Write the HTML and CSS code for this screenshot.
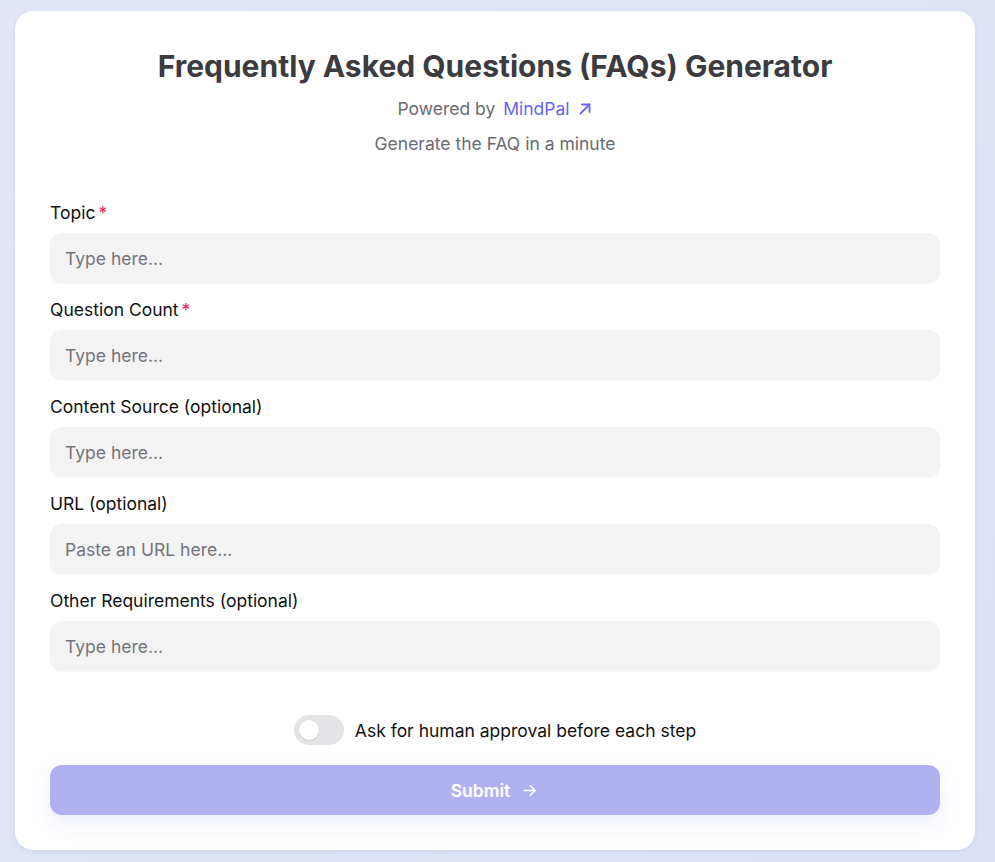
FILE: index.html
```html
<!DOCTYPE html>
<html>
<head>
<meta charset="UTF-8">
<title>FAQs Generator</title>
<link rel="stylesheet" href="styles.css">
</head>
<body>
  <div class="card">
    <div class="head">
      <h1>Frequently Asked Questions (FAQs) Generator</h1>
      <p class="powered">Powered by <a href="#">MindPal
        <svg width="16" height="16" viewBox="0 0 16 16" fill="none" stroke="currentColor" stroke-width="1.8" stroke-linecap="round" stroke-linejoin="round"><path d="M3.5 12.5L12.5 3.5"/><path d="M5 3.5h7.5V11"/></svg></a></p>
      <p class="sub">Generate the FAQ in a minute</p>
    </div>

    <form class="fields">
      <div class="field">
        <label>Topic<span class="req">*</span></label>
        <input type="text" placeholder="Type here...">
      </div>
      <div class="field">
        <label>Question Count<span class="req">*</span></label>
        <input type="text" placeholder="Type here...">
      </div>
      <div class="field">
        <label>Content Source (optional)</label>
        <input type="text" placeholder="Type here...">
      </div>
      <div class="field">
        <label>URL (optional)</label>
        <input type="text" placeholder="Paste an URL here...">
      </div>
      <div class="field">
        <label>Other Requirements (optional)</label>
        <input type="text" placeholder="Type here...">
      </div>
    </form>

    <div class="approval">
      <span class="toggle"><span class="knob"></span></span>
      <span>Ask for human approval before each step</span>
    </div>

    <button class="submit">Submit
      <svg width="19" height="19" viewBox="0 0 24 24" fill="none" stroke="currentColor" stroke-width="2" stroke-linecap="round" stroke-linejoin="round"><path d="M5 12h14"/><path d="M13 6l6 6-6 6"/></svg>
    </button>
  </div>
</body>
</html>
```

FILE: styles.css
```css
* {
  box-sizing: border-box;
}
body {
  margin: 0;
  padding: 11px 20px 11px 15px;
  font-family: Inter, "Noto Sans", sans-serif;
  background: linear-gradient(135deg, #e2e6f8 0%, #dde1f5 100%);
  min-height: 862px;
}
.card {
  width: 960px;
  background: #fff;
  border-radius: 18px;
  padding: 37px 35px 35px;
  box-shadow: 0 1px 4px rgba(90, 100, 160, 0.15);
}
.head {
  text-align: center;
}
.head h1 {
  margin: 0;
  font-size: 30px;
  line-height: 36px;
  font-weight: 700;
  color: #3b3b40;
}
.powered {
  margin: 13px 0 0;
  font-size: 17.5px;
  line-height: 24px;
  color: #6b6b72;
}
.powered a {
  color: #6366f1;
  text-decoration: none;
  margin-left: 3px;
}
.powered svg {
  vertical-align: -2px;
  margin-left: 2px;
}
.sub {
  margin: 11px 0 0;
  font-size: 17.5px;
  line-height: 24px;
  color: #6b6b72;
}
.fields {
  margin-top: 45px;
  display: flex;
  flex-direction: column;
  gap: 15px;
}
.field {
  display: flex;
  flex-direction: column;
  gap: 8px;
}
.field label {
  font-size: 17.5px;
  line-height: 24px;
  color: #111;
}
.req {
  color: #f0245a;
  margin-left: 3px;
}
.field input {
  height: 50px;
  border: none;
  border-radius: 12px;
  background: #f3f3f3;
  padding: 0 15px;
  font-family: inherit;
  font-size: 17.5px;
  color: #111;
  box-shadow: 0 1px 2px rgba(0, 0, 0, 0.04);
  outline: none;
}
.field input::placeholder {
  color: #74747c;
}
.approval {
  margin-top: 44px;
  display: flex;
  justify-content: center;
  align-items: center;
  gap: 11px;
  font-size: 17.5px;
  color: #111;
}
.toggle {
  width: 50px;
  height: 30px;
  border-radius: 15px;
  background: #e4e4e7;
  padding: 5px;
  display: flex;
}
.knob {
  width: 20px;
  height: 20px;
  border-radius: 50%;
  background: #fff;
  box-shadow: 0 1px 2px rgba(0, 0, 0, 0.1);
}
.submit {
  margin-top: 20px;
  width: 100%;
  height: 50px;
  border: none;
  border-radius: 12px;
  background: #b1b1f2;
  color: #fff;
  font-family: inherit;
  font-size: 17.5px;
  font-weight: 600;
  display: flex;
  justify-content: center;
  align-items: center;
  gap: 10px;
  box-shadow: 0 8px 22px rgba(99, 102, 241, 0.12);
}
```
